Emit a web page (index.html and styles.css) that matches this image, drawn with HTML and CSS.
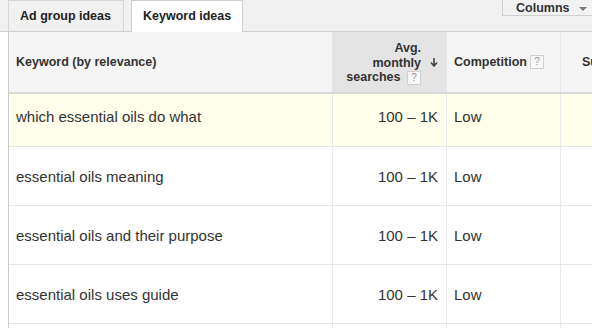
FILE: index.html
```html
<!DOCTYPE html>
<html lang="en">
<head>
  <meta charset="UTF-8" />
  <meta name="viewport" content="width=device-width, initial-scale=1.0" />
  <title>Keyword Planner</title>
  <link rel="stylesheet" href="styles.css">
</head>
<body>
  <div class="tabbar">
    <div class="tab">Ad group ideas</div>
    <div class="tab active">Keyword ideas</div>
    <div class="columns-btn">Columns <span class="caret"></span></div>
  </div>

  <div class="grid">
    <div class="row head">
      <div class="cell">Keyword (by relevance)</div>
      <div class="cell num sorted">
        <div class="stack">Avg.<br>monthly<br>searches <span class="help">?</span></div>
        <svg class="arrow" width="8" height="9" viewBox="0 0 8 9"><path d="M4 0v7M1 4.5l3 3.5 3-3.5" fill="none" stroke="#444" stroke-width="1.6"/></svg>
      </div>
      <div class="cell">Competition <span class="help">?</span></div>
      <div class="cell last">Suggested bid</div>
    </div>

    <div class="row first">
      <div class="cell">which essential oils do what</div>
      <div class="cell num">100 – 1K</div>
      <div class="cell">Low</div>
      <div class="cell last"></div>
    </div>
    <div class="row">
      <div class="cell">essential oils meaning</div>
      <div class="cell num">100 – 1K</div>
      <div class="cell">Low</div>
      <div class="cell last"></div>
    </div>
    <div class="row">
      <div class="cell">essential oils and their purpose</div>
      <div class="cell num">100 – 1K</div>
      <div class="cell">Low</div>
      <div class="cell last"></div>
    </div>
    <div class="row">
      <div class="cell">essential oils uses guide</div>
      <div class="cell num">100 – 1K</div>
      <div class="cell">Low</div>
      <div class="cell last"></div>
    </div>
    <div class="row">
      <div class="cell"></div>
      <div class="cell num"></div>
      <div class="cell"></div>
      <div class="cell last"></div>
    </div>
  </div>
</body>
</html>
```

FILE: styles.css
```css
body {
  margin: 0;
  background: #fff;
  font-family: "Liberation Sans", Arial, sans-serif;
  color: #333;
  overflow: hidden;
  width: 592px;
  height: 328px;
}
.tabbar {
  display: flex;
  align-items: flex-start;
  height: 31px;
  background: #f1f1f1;
  border-bottom: 1px solid #cfcfcf;
  padding-left: 8px;
}
.tab {
  box-sizing: border-box;
  height: 31px;
  padding: 0 11px;
  line-height: 31px;
  font-size: 12.5px;
  font-weight: bold;
  color: #222;
  white-space: nowrap;
  background: #f1f1f1;
  border: 1px solid #d6d6d6;
  border-bottom: none;
  width: 116px;
  margin-right: 7px;
}
.tab.active {
  background: #fff;
  height: 32px;
  margin-bottom: -1px;
  border-color: #cfcfcf;
  width: 112px;
}
.columns-btn {
  margin-left: auto;
  box-sizing: border-box;
  width: 90px;
  height: 24px;
  margin-top: -8px;
  padding: 8px 0 0 13px;
  font-size: 12.5px;
  font-weight: bold;
  color: #333;
  white-space: nowrap;
  background: #f2f2f2;
  border: 1px solid #d0d0d0;
  border-right: none;
}
.caret {
  display: inline-block;
  margin-left: 6px;
  vertical-align: middle;
  border-left: 4px solid transparent;
  border-right: 4px solid transparent;
  border-top: 4px solid #777;
}
.grid {
  margin-left: 8px;
  border-left: 1px solid #cccccc;
}
.row {
  display: grid;
  grid-template-columns: 324px 114px 114px 120px;
  height: 59px;
  border-bottom: 1px solid #e6e6e6;
  box-sizing: border-box;
  font-size: 15px;
}
.cell {
  box-sizing: border-box;
  border-right: 1px solid #ebebeb;
  padding: 0 7px;
  display: flex;
  align-items: center;
  white-space: nowrap;
  overflow: hidden;
}
.cell.num {
  justify-content: flex-end;
  padding-right: 8px;
}
.cell.last {
  border-right: none;
}
.row.head {
  height: 62px;
  background: #f5f5f5;
  border-bottom: 2px solid #d9d9d9;
  font-size: 12.5px;
  font-weight: bold;
  color: #333;
}
.row.head .cell {
  border-right: 1px solid #e6e6e6;
}
.row.head .cell.last {
  padding-left: 21px;
  border-right: none;
}
.row.head .sorted {
  background: #e4e4e4;
  padding-right: 7px;
}
.stack {
  text-align: right;
  line-height: 14.5px;
  margin-top: 2px;
}
.arrow {
  margin-left: 9px;
  margin-right: 1px;
}
.help {
  display: inline-block;
  box-sizing: border-box;
  width: 14px;
  height: 14px;
  margin-left: 3px;
  border: 1px solid #cfcfcf;
  background: #f8f8f8;
  color: #999;
  font-size: 10px;
  font-weight: normal;
  line-height: 12px;
  text-align: center;
  vertical-align: middle;
}
.row.first {
  height: 53px;
  background: #ffffec;
}
.row.first .cell {
  align-items: flex-start;
  padding-top: 14px;
}
```
